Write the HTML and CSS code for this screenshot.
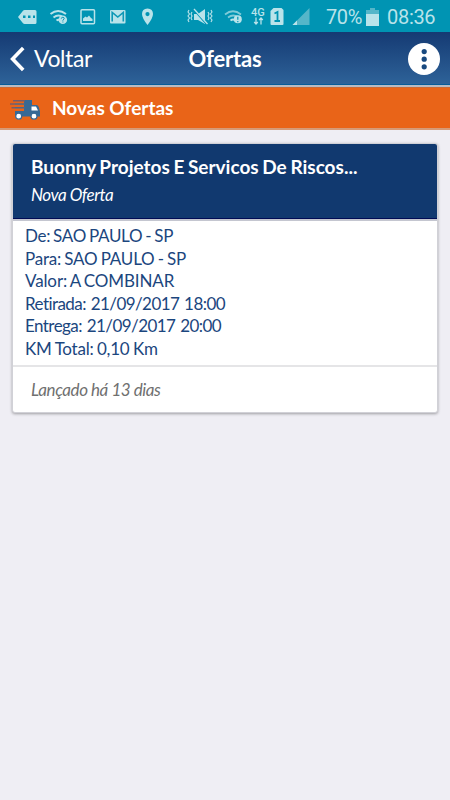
FILE: index.html
```html
<!DOCTYPE html>
<html lang="pt-BR">
<head>
<meta charset="utf-8">
<title>Ofertas</title>
<link rel="stylesheet" href="styles.css">
</head>
<body>
<div class="status">
  <svg class="status-icons" width="310" height="32" viewBox="0 0 310 32" fill="#b9e3ea">
    <path fill-rule="evenodd" d="M18 17l5-6.2q.6-.8 1.600-.8H35q1.500 0 1.500 1.500v11q0 1.500-1.500 1.500H24.600q-1 0-1.600-.8zM23 15.500v2.500h2.500v-2.500zM28 15.500v2.500h2.500v-2.500zM33 15.500v2.500h2v-2.500z"/>
    <g fill="none" stroke="#b9e3ea" stroke-width="2"><path d="M50.500 14q7.500-6 15.500 0M53.500 17.500q5-4 10 0M56.500 20.500q2-1.500 4 0"/></g>
    <circle cx="62.800" cy="19.700" r="4.300"/><path d="M61.300 18.600q.1-1.300 1.500-1.300t1.400 1.200q0 .7-1.300 1.500v.6M62.900 21.500v1" fill="none" stroke="#0094b3"/>
    <rect x="81" y="9.700" width="13.500" height="14" rx="1" fill="none" stroke="#b9e3ea" stroke-width="1.500"/><path d="M83 21v-2.500l2.500-2 1.500 1 2-2 2 2.500 1.500 1v2z"/>
    <rect x="110" y="10" width="15.500" height="13.500" rx="1"/><path d="M112.200 21.500V12.500l5.600 4.500 5.500-4.500v9" fill="none" stroke="#0e98b6" stroke-width="1.600"/>
    <path fill-rule="evenodd" d="M147.500 8.500q5.500.3 5.500 5.500 0 4-5.500 11-5.500-7-5.500-11 0-5.200 5.500-5.500zm0 3.500a2.100 2.100 0 1 0 0 4.200 2.100 2.100 0 0 0 0-4.200z"/>
    <path d="M194 14h4l7-5v15l-7-4h-4z"/><path d="M193 8.800l13.500 15.500" stroke="#0094b3" stroke-width="1.500"/><path d="M194 9l13.500 15" stroke="#b9e3ea" stroke-width="1.300"/>
    <g fill="none" stroke="#b9e3ea" stroke-width="1.100"><path d="M189 10l-1 2 1.500 2-1.500 2 1.500 2-1.500 2 1 2M192 12l-1 2 1 2-1 2 1 2M208 12l1 2-1 2 1 2-1 2M211 10l1 2-1.500 2 1.500 2-1.500 2 1.500 2-1 2"/></g>
    <g fill="none" stroke="#7fcbd8" stroke-width="1.700"><path d="M225 14.500q8-6.500 16 0M228 17.500q5.500-4 10 0"/><path d="M230.500 20.500q2.500-2 5 0" stroke="#b9e3ea"/></g><circle cx="237.800" cy="19.300" r="4"/><path d="M237.800 16.800v3M237.800 21v1.200" stroke="#0094b3" stroke-width="1.200"/>
    <text x="251" y="15.800" class="network">4G</text>
    <path d="M256 17.500v6M254.200 22l1.800 2 1.800-2M261 24.500v-6M259.200 20l1.800-2 1.800 2" fill="none" stroke="#b9e3ea" stroke-width="1.300"/>
    <path d="M273.500 8h8l2 2v14q0 1-1 1h-11q-1 0-1-1V11z"/><path d="M274.500 13.500l3-1.500v9M274.500 21h5.500" fill="none" stroke="#0094b3" stroke-width="1.800"/>
    <path d="M309.500 8v17H292.500z" fill="#55b6c9"/><path d="M292.500 25l4.500-4.500V25z"/>
  </svg>
  <span class="battery-text">70%</span>
  <svg class="battery" width="13" height="18" viewBox="0 0 13 18"><path d="M4 0h5v2h4v4H0V2h4z" fill="#55b6c9"/><path d="M0 6h13v12H0z" fill="#b9e3ea"/></svg>
  <span class="clock">08:36</span>
</div>
<header class="topbar">
  <div class="back"><svg width="16" height="26" viewBox="0 0 16 26"><path d="M14.200 2L3.600 13l10.600 11" fill="none" stroke="#fff" stroke-width="3.600"/></svg><span>Voltar</span></div>
  <h1>Ofertas</h1>
  <div class="more"><svg width="32" height="32" viewBox="0 0 32 32"><circle cx="16" cy="16" r="16" fill="#fff"/><g fill="#18497f"><circle cx="16.200" cy="8.600" r="2.600"/><circle cx="16.200" cy="16.200" r="2.600"/><circle cx="16.200" cy="23.800" r="2.600"/></g></svg></div>
</header>
<div class="section">
  <svg width="31" height="21" viewBox="0 0 31 21"><path d="M14 1h8v5h5q2 1 2.500 5l.5 1v5.500H5V12h9z" fill="#386994"/><path d="M3 1.700h12M0 5h5M1.500 8.700H5" stroke="#795c67" stroke-width="1.500"/><path d="M5 5h10M5 8.700h10" stroke="#4b6889" stroke-width="1.600"/><path d="M21.500 7.500H26l2 4h-6.500z" fill="#fff"/><circle cx="8.700" cy="17.200" r="3" fill="#fff" stroke="#386994" stroke-width="1.200"/><circle cx="24" cy="17.200" r="3" fill="#fff" stroke="#386994" stroke-width="1.200"/></svg>
  <h2>Novas Ofertas</h2>
</div>
<main>
  <article class="card">
    <div class="card-head">
      <h3>Buonny Projetos E Servicos De Riscos...</h3>
      <p>Nova Oferta</p>
    </div>
    <div class="details">
      <p class="from">De: SAO PAULO - SP</p>
      <p class="to">Para: SAO PAULO - SP</p>
      <p class="value">Valor: A COMBINAR</p>
      <p class="date">Retirada: 21/09/2017 18:00</p>
      <p class="date">Entrega: 21/09/2017 20:00</p>
      <p class="distance">KM Total: 0,10 Km</p>
    </div>
    <div class="card-foot">Lançado há 13 dias</div>
  </article>
</main>
</body>
</html>
```
FILE: styles.css
```css
* { box-sizing: border-box; }
body { margin: 0; width: 450px; height: 800px; overflow: hidden; background: #efeef4; font-family: Lato, sans-serif; font-variant-ligatures: none; }
h1, h2, h3, p { margin: 0; }
svg { display: block; flex: none; }
.status { height: 32px; display: flex; background: #0094b3; color: #b9e3ea; font: 20px/35px Roboto, sans-serif; white-space: nowrap; }
.network { font: 500 11px Roboto, sans-serif; }
.battery-text { width: 36px; margin-left: 16px; letter-spacing: -.4px; }
.battery { margin: 8px 0 0 4px; }
.clock { margin-left: 8px; letter-spacing: -.3px; }
.topbar { height: 55px; display: grid; grid-template-columns: 150px 150px 150px; align-items: center; color: #fff; background: linear-gradient(#153a73, #2e6399); border-bottom: 2px solid #b8bbc3; box-shadow: inset 0 -1px #075c99; }
.back { display: flex; align-items: center; gap: 9px; padding-left: 9px; font-size: 23px; line-height: 30px; letter-spacing: -.4px; }
.back span { margin-top: -2px; }
h1 { font-size: 22px; line-height: 30px; text-align: center; letter-spacing: -.2px; }
.more { justify-self: end; margin-right: 10px; }
.section { height: 43px; display: flex; align-items: center; padding-left: 10px; gap: 11px; background: #e96418; border-top: 1px solid #c96a38; border-bottom: 2px solid #d69a77; color: #fff; }
.section svg { margin-top: 3px; }
h2 { font-size: 19px; line-height: 24px; margin-top: -1px; }
main { padding: 13px 12px; }
.card { height: 270px; border-radius: 3px; background: #fff; border: 1px solid #d1d1d7; box-shadow: 0 1px 3px #0005; overflow: hidden; }
.card-head { height: 77px; padding: 10px 18px 0; color: #fff; background: #11396f; border-bottom: 2px solid #c4c6d0; box-shadow: inset 0 -1px #000b55; }
h3 { font-size: 19px; line-height: 25px; white-space: nowrap; word-spacing: -1px; }
.card-head p { margin-top: 5px; font-size: 17px; font-style: italic; line-height: 22px; letter-spacing: -.45px; }
.details { height: 146px; padding: 4px 12px 0; color: #1b467e; font-size: 17px; line-height: 22.500px; border-bottom: 2px solid #e5e5e7; }
.from { letter-spacing: -.32px; word-spacing: -1px; }
.to { letter-spacing: -.2px; word-spacing: -1px; }
.value { letter-spacing: -.12px; word-spacing: -1px; }
.date { letter-spacing: -.56px; word-spacing: 1px; }
.distance { letter-spacing: -.25px; word-spacing: -.5px; }
.card-foot { padding-left: 18px; height: 46px; font-size: 17px; font-style: italic; line-height: 46px; color: #707070; letter-spacing: -.44px; }
```
